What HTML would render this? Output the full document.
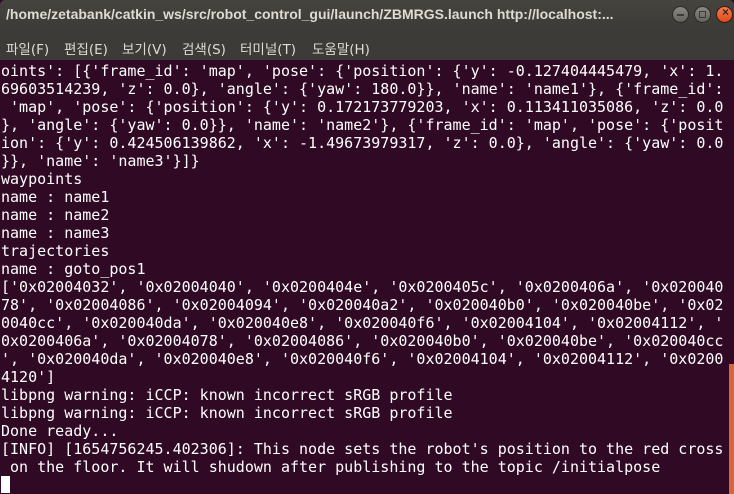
<!DOCTYPE html>
<html><head><meta charset="utf-8"><style>
body{margin:0;width:734px;height:494px;overflow:hidden;background:#300a24;}
#title{position:absolute;left:0;top:0;width:734px;height:30px;background:linear-gradient(#45443f,#3c3b37);border-radius:5px 5px 0 0;}
#title span{position:absolute;left:6px;top:6px;font:bold 14px "Liberation Sans",sans-serif;color:#dfdbd2;white-space:nowrap;width:664px;overflow:hidden}
.btn{position:absolute;top:6px;width:17px;height:17px;border-radius:50%;background:linear-gradient(#8a8883,#65635e);border:1px solid #2c2b28;box-sizing:border-box}
#menu{position:absolute;left:0;top:30px;width:734px;height:30px;background:#3c3b37;font:13.5px "DejaVu Sans","Noto Sans CJK KR",sans-serif;color:#dfdbd2}
#menu span{position:absolute;top:8px;white-space:nowrap}
#term{position:absolute;left:1px;top:62px;width:728px;font:15px "DejaVu Sans Mono","Liberation Mono",monospace;line-height:18px;color:#ffffff;white-space:pre;}
#sb{position:absolute;left:729px;top:364px;width:5px;height:130px;background:#d8643a}
#cur{display:inline-block;width:9px;height:17px;background:#fff;vertical-align:top}
</style></head><body>
<div id="title"><span>/home/zetabank/catkin_ws/src/robot_control_gui/launch/ZBMRGS.launch http://localhost:...</span>
<div class="btn" style="left:672px;"><div style="position:absolute;left:4px;top:7px;width:7px;height:2px;background:#3c3b37"></div></div>
<div class="btn" style="left:694px;"><div style="position:absolute;left:4px;top:4px;width:7px;height:7px;border:1px solid #3c3b37;box-sizing:border-box"></div></div>
<div class="btn" style="left:716px;background:linear-gradient(#f27a4e,#df4b1c);border-color:#3a1a10"><div style="position:absolute;left:1px;top:-2px;width:15px;text-align:center;font:bold 12px sans-serif;color:#3c2a20">×</div></div>
</div>
<div id="menu"><span style="left:6px">파일(F)</span><span style="left:64px">편집(E)</span><span style="left:122px">보기(V)</span><span style="left:182px">검색(S)</span><span style="left:240px">터미널(T)</span><span style="left:312px">도움말(H)</span></div>
<div id="term">oints': [{'frame_id': 'map', 'pose': {'position': {'y': -0.127404445479, 'x': 1.
69603514239, 'z': 0.0}, 'angle': {'yaw': 180.0}}, 'name': 'name1'}, {'frame_id':
 'map', 'pose': {'position': {'y': 0.172173779203, 'x': 0.113411035086, 'z': 0.0
}, 'angle': {'yaw': 0.0}}, 'name': 'name2'}, {'frame_id': 'map', 'pose': {'posit
ion': {'y': 0.424506139862, 'x': -1.49673979317, 'z': 0.0}, 'angle': {'yaw': 0.0
}}, 'name': 'name3'}]}
waypoints
name : name1
name : name2
name : name3
trajectories
name : goto_pos1
['0x02004032', '0x02004040', '0x0200404e', '0x0200405c', '0x0200406a', '0x020040
78', '0x02004086', '0x02004094', '0x020040a2', '0x020040b0', '0x020040be', '0x02
0040cc', '0x020040da', '0x020040e8', '0x020040f6', '0x02004104', '0x02004112', '
0x0200406a', '0x02004078', '0x02004086', '0x020040b0', '0x020040be', '0x020040cc
', '0x020040da', '0x020040e8', '0x020040f6', '0x02004104', '0x02004112', '0x0200
4120']
libpng warning: iCCP: known incorrect sRGB profile
libpng warning: iCCP: known incorrect sRGB profile
Done ready...
[INFO] [1654756245.402306]: This node sets the robot's position to the red cross
 on the floor. It will shudown after publishing to the topic /initialpose
<span id="cur"></span></div>
<div id="sb"></div>
</body></html>
